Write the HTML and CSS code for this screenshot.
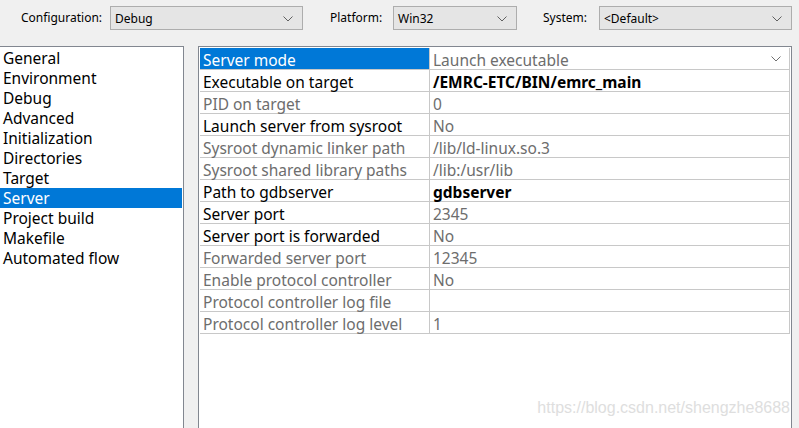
FILE: index.html
```html
<!DOCTYPE html>
<html>
<head>
<meta charset="utf-8">
<link rel="stylesheet" href="styles.css">
</head>
<body>
<div class="topbar">
  <span class="lbl lbl-config">Configuration:</span>
  <div class="combo combo-config"><span>Debug</span><svg class="chev" width="10" height="6" viewBox="0 0 10 6"><path d="M0.5 0.5 L5 5 L9.5 0.5" fill="none" stroke="#606060" stroke-width="1"/></svg></div>
  <span class="lbl lbl-platform">Platform:</span>
  <div class="combo combo-platform"><span>Win32</span><svg class="chev" width="10" height="6" viewBox="0 0 10 6"><path d="M0.5 0.5 L5 5 L9.5 0.5" fill="none" stroke="#606060" stroke-width="1"/></svg></div>
  <span class="lbl lbl-system">System:</span>
  <div class="combo combo-system"><span>&lt;Default&gt;</span><svg class="chev" width="10" height="6" viewBox="0 0 10 6"><path d="M0.5 0.5 L5 5 L9.5 0.5" fill="none" stroke="#606060" stroke-width="1"/></svg></div>
</div>
<div class="main">
  <ul class="nav">
    <li>General</li>
    <li>Environment</li>
    <li>Debug</li>
    <li>Advanced</li>
    <li>Initialization</li>
    <li>Directories</li>
    <li>Target</li>
    <li class="sel">Server</li>
    <li>Project build</li>
    <li>Makefile</li>
    <li>Automated flow</li>
  </ul>
  <div class="panel">
    <div class="grid">
      <div class="row"><div class="name sel">Server mode</div><div class="val">Launch executable<svg class="chev2" width="10" height="6" viewBox="0 0 10 6"><path d="M0.5 0.5 L5 5 L9.5 0.5" fill="none" stroke="#707070" stroke-width="1"/></svg></div></div>
      <div class="row"><div class="name">Executable on target</div><div class="val bold">/EMRC-ETC/BIN/emrc_main</div></div>
      <div class="row"><div class="name dis">PID on target</div><div class="val">0</div></div>
      <div class="row"><div class="name">Launch server from sysroot</div><div class="val">No</div></div>
      <div class="row"><div class="name dis">Sysroot dynamic linker path</div><div class="val">/lib/ld-linux.so.3</div></div>
      <div class="row"><div class="name dis">Sysroot shared library paths</div><div class="val">/lib:/usr/lib</div></div>
      <div class="row"><div class="name">Path to gdbserver</div><div class="val bold">gdbserver</div></div>
      <div class="row"><div class="name">Server port</div><div class="val">2345</div></div>
      <div class="row"><div class="name">Server port is forwarded</div><div class="val">No</div></div>
      <div class="row"><div class="name dis">Forwarded server port</div><div class="val">12345</div></div>
      <div class="row"><div class="name dis">Enable protocol controller</div><div class="val">No</div></div>
      <div class="row"><div class="name dis">Protocol controller log file</div><div class="val"></div></div>
      <div class="row"><div class="name dis">Protocol controller log level</div><div class="val">1</div></div>
    </div>
    <div class="watermark">https://blog.csdn.net/shengzhe8688</div>
  </div>
</div>
</body>
</html>
```
FILE: styles.css
```css
html, body {
  margin: 0;
  padding: 0;
  background: #f0f0f0;
  width: 799px;
  height: 428px;
  overflow: hidden;
  font-family: "Noto Sans", "Open Sans", sans-serif;
}
.topbar {
  height: 46px;
  display: flex;
  align-items: flex-start;
  font-size: 12px;
  color: #000;
}
.lbl {
  margin-top: 10px;
  line-height: 16px;
}
.lbl-config { margin-left: 21px; width: 89px; }
.lbl-platform { margin-left: 27px; width: 63px; }
.lbl-system { margin-left: 26px; width: 56px; }
.combo {
  margin-top: 6px;
  height: 22px;
  border: 1px solid #adadad;
  background: #e5e5e5;
  display: flex;
  align-items: center;
  justify-content: space-between;
  padding: 2px 9px 0 4px;
  box-sizing: border-box;
  height: 24px;
}
.combo span { line-height: 16px; }
.combo-config { width: 193px; }
.combo-platform { width: 124px; }
.combo-system { width: 193px; }
.main {
  display: flex;
  align-items: flex-start;
}
.nav {
  list-style: none;
  margin: 0;
  padding: 1px 0 0 0;
  width: 183px;
  height: 381px;
  background: #fff;
  border-top: 1px solid #828790;
  border-right: 1px solid #828790;
  font-size: 15.5px;
}
.nav li {
  height: 20px;
  line-height: 20px;
  padding-left: 3px;
  white-space: nowrap;
}
.nav li.sel {
  background: #0078d7;
  color: #fff;
  margin-right: 1px;
}
.panel {
  margin-left: 14px;
  width: 591px;
  height: 381px;
  background: #fff;
  border-top: 1px solid #828790;
  border-left: 1px solid #828790;
  border-right: 1px solid #828790;
  padding: 1px 0 0 1px;
  position: relative;
}
.grid {
  width: 589px;
  border-right: 1px solid #c8c8c8;
  font-size: 15.5px;
}
.row {
  display: flex;
  height: 21px;
  border-bottom: 1px solid #c8c8c8;
}
.name, .val {
  height: 21px;
  box-sizing: border-box;
  padding-top: 2px;
  line-height: 20px;
  white-space: nowrap;
}
.name {
  width: 230px;
  padding-left: 3px;
  border-right: 1px solid #c8c8c8;
  color: #000;
}
.name.dis { color: #6d6d6d; }
.name.sel { background: #0078d7; color: #fff; }
.val {
  flex: 1;
  padding-left: 3px;
  padding-right: 8px;
  color: #6d6d6d;
  display: flex;
  align-items: center;
  justify-content: space-between;
}
.val .chev2 { margin-top: -2px; }
.val.bold { font-weight: bold; color: #000; }
.watermark {
  position: absolute;
  right: 1px;
  top: 352px;
  font-family: "Liberation Sans", Arial, sans-serif;
  font-size: 16px;
  color: #dedede;
}
```
